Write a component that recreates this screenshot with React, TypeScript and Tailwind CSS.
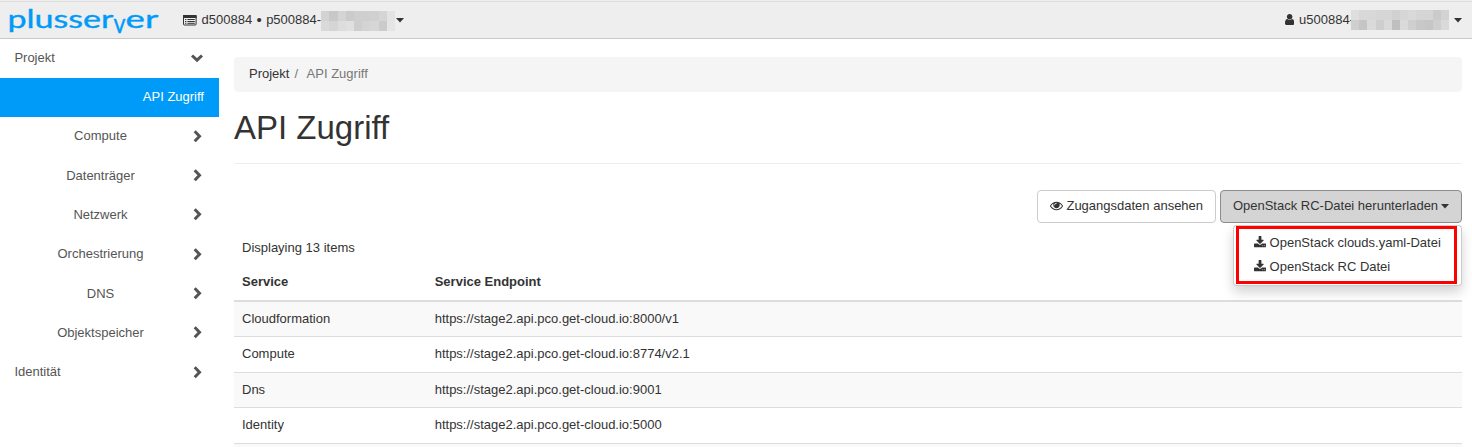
import type { ReactNode } from 'react';

function Glyph({ w, d, className = '' }: { w: number; d: string; className?: string }) {
  return (
    <svg
      className={`inline-block h-[13px] shrink-0 ${className}`}
      style={{ width: (w / 1792) * 13 }}
      viewBox={`0 0 ${w} 1792`}
      fill="currentColor"
      aria-hidden="true"
    >
      <path transform="translate(0 1536) scale(1 -1)" d={d} />
    </svg>
  );
}

const USER =
  'M1280 137q0 -109 -62.5 -187t-150.5 -78h-854q-88 0 -150.5 78t-62.5 187q0 85 8.5 160.5t31.5 152t58.5 131t94 89t134.5 34.5q131 -128 313 -128t313 128q76 0 134.5 -34.5t94 -89t58.5 -131t31.5 -152t8.5 -160.5zM1024 1024q0 -159 -112.5 -271.5t-271.5 -112.5t-271.5 112.5t-112.5 271.5t112.5 271.5t271.5 112.5t271.5 -112.5t112.5 -271.5z';
const EYE =
  'M1664 576q-152 236 -381 353q61 -104 61 -225q0 -185 -131.5 -316.5t-316.5 -131.5t-316.5 131.5t-131.5 316.5q0 121 61 225q-229 -117 -381 -353q133 -205 333.5 -326.5t434.5 -121.5t434.5 121.5t333.5 326.5zM944 960q0 20 -14 34t-34 14q-125 0 -214.5 -89.5t-89.5 -214.5q0 -20 14 -34t34 -14t34 14t14 34q0 86 61 147t147 61q20 0 34 14t14 34zM1792 576q0 -34 -20 -69q-140 -230 -376.5 -368.5t-499.5 -138.5t-499.5 139t-376.5 368q-20 35 -20 69t20 69q140 229 376.5 368t499.5 139t499.5 -139t376.5 -368q20 -35 20 -69z';
const DOWNLOAD =
  'M1280 192q0 26 -19 45t-45 19t-45 -19t-19 -45t19 -45t45 -19t45 19t19 45zM1536 192q0 26 -19 45t-45 19t-45 -19t-19 -45t19 -45t45 -19t45 19t19 45zM1664 416v-320q0 -40 -28 -68t-68 -28h-1472q-40 0 -68 28t-28 68v320q0 40 28 68t68 28h465l135 -136q58 -56 136 -56t136 56l136 136h464q40 0 68 -28t28 -68zM1339 985q17 -41 -14 -70l-448 -448q-18 -19 -45 -19t-45 19l-448 448q-31 29 -14 70q17 39 59 39h256v448q0 26 19 45t45 19h256q26 0 45 -19t19 -45v-448h256q42 0 59 -39z';

function Caret({ className = '' }: { className?: string }) {
  return (
    <svg className={`inline-block h-[5px] w-2 shrink-0 ${className}`} viewBox="0 0 8 5" fill="currentColor" aria-hidden="true">
      <path d="M0 0H8L4 4.6Z" />
    </svg>
  );
}

function Chevron({ open = false }: { open?: boolean }) {
  return (
    <svg className="h-[14px] w-[14px]" viewBox="0 0 14 14" fill="none" stroke="currentColor" strokeWidth="3" aria-hidden="true">
      {open ? <path d="M2 4.5 7 9.2 12 4.5" /> : <path d="M4.7 1.3 9.5 6.3 4.7 11.3" />}
    </svg>
  );
}

function ListIcon() {
  return (
    <svg className="h-[11px] w-[14px] shrink-0" viewBox="0 0 14 11" fill="none" stroke="currentColor" aria-hidden="true">
      <rect x="0.5" y="0.5" width="12.6" height="9.5" rx="0.8" />
      <path d="M0 1.5H13.6" strokeWidth="3" />
      <path d="M2 4.5H3.4M4.4 4.5H11.8M2 6.5H3.4M4.4 6.5H11.8M2 8.3H3.4M4.4 8.3H11.8" strokeWidth="1" />
    </svg>
  );
}

function Mosaic({ colors, className }: { colors: string[]; className: string }) {
  return (
    <div className={`grid grid-rows-2 ${className}`}>
      {colors.map((c, i) => (
        <span key={i} style={{ backgroundColor: c }} />
      ))}
    </div>
  );
}

const projectTiles = [
  '#d3d3d3', '#c8c8c8', '#d4d4d4', '#cbcbcb', '#cfcfcf', '#cfcfcf', '#d0d0d0', '#d5d5d5', '#e3e3e3',
  '#dadada', '#d5d5d5', '#dddddd', '#e0e0e0', '#cecece', '#d4d4d4', '#d6d6d6', '#cbcbcb', '#e5e5e5',
];
const userTiles = [
  '#dedede', '#d8d8d8', '#d8d8d8', '#d6d6d6', '#d6d6d6', '#d1d1d1', '#d6d6d6', '#d9d9d9', '#d5d5d5', '#d5d5d5', '#cbcbcb', '#d3d3d3',
  '#cfcfcf', '#c5c5c5', '#dadada', '#cecece', '#d9d9d9', '#bfbfbf', '#dadada', '#cfcfcf', '#c8c8c8', '#c6c6c6', '#cfcfcf', '#dadada',
];

function Logo() {
  return (
    <svg
      className="h-[36px] w-[151px] shrink-0 overflow-visible fill-[#009bf8] stroke-[#009bf8] stroke-[0.35] font-['Lato',sans-serif]"
      viewBox="0 0 151 36"
      role="img"
      aria-label="plusserver"
    >
      <text transform="translate(-0.6 25.5) scale(1.36 1)" textLength="78" lengthAdjust="spacingAndGlyphs" className="text-[25px]">
        plusser
      </text>
      <text transform="translate(105.5 30.5)" textLength="12" lengthAdjust="spacingAndGlyphs" className="text-[27px]">
        v
      </text>
      <text transform="translate(117.6 25.5) scale(1.36 1)" textLength="24" lengthAdjust="spacingAndGlyphs" className="text-[25px]">
        er
      </text>
    </svg>
  );
}

function Header() {
  return (
    <header className="h-[39px] border-b border-b-[#c8c8c8] bg-[#eeeeee] pt-px">
      <div className="flex h-[37px] items-center border-t border-[#dddddd] pr-[10px] pl-2">
        <Logo />
        <div className="ml-6 flex items-center pt-px">
          <ListIcon />
          <span className="ml-[4.5px] whitespace-pre">d500884</span>
          <span className="w-[14px] pb-px text-center text-[15px] leading-[18px]">•</span>
          <span className="w-[55px] whitespace-nowrap">p500884-</span>
          <Mosaic colors={projectTiles} className="h-5 w-[74px] grid-cols-9" />
          <Caret className="ml-[0.5px]" />
        </div>
        <div className="ml-auto flex items-center">
          <Glyph w={1280} d={USER} className="mb-px" />
          <span className="ml-[5px] w-[52px] pt-px whitespace-nowrap">u500884-</span>
          <Mosaic colors={userTiles} className="h-5 w-[98px] grid-cols-12" />
          <Caret className="ml-[5px]" />
        </div>
      </div>
    </header>
  );
}

const panels = ['Compute', 'Datenträger', 'Netzwerk', 'Orchestrierung', 'DNS', 'Objektspeicher'];

function NavRow({ children, nested = false, open = false }: { children: ReactNode; nested?: boolean; open?: boolean }) {
  return (
    <div className="flex h-[39.3px] items-center pr-[15px] pb-[0.4px] pl-[14.4px]">
      <span className={nested ? 'w-[172.2px] text-center' : 'w-[172.2px]'}>{children}</span>
      <span className="ml-[3px]">
        <Chevron open={open} />
      </span>
    </div>
  );
}

function Sidebar() {
  return (
    <nav className="w-[219px] shrink-0 text-[#555555]">
      <NavRow open>Projekt</NavRow>
      <div className="flex h-[39px] items-center justify-end bg-[#009bf8] pr-[15px] pb-px text-white">API Zugriff</div>
      {panels.map((p) => (
        <NavRow key={p} nested>
          {p}
        </NavRow>
      ))}
      <NavRow>Identität</NavRow>
    </nav>
  );
}

const services = [
  ['Cloudformation', 'https://stage2.api.pco.get-cloud.io:8000/v1'],
  ['Compute', 'https://stage2.api.pco.get-cloud.io:8774/v2.1'],
  ['Dns', 'https://stage2.api.pco.get-cloud.io:9001'],
  ['Identity', 'https://stage2.api.pco.get-cloud.io:5000'],
];

function Actions() {
  return (
    <div className="mt-[26px] flex justify-end gap-1">
      <button className="flex h-[33px] w-[179px] items-center justify-center gap-[3.5px] rounded border border-[#cccccc] bg-white">
        <Glyph w={1792} d={EYE} className="mb-0.5" />
        Zugangsdaten ansehen
      </button>
      <div className="relative">
        <button className="flex h-[33px] w-[242px] items-center justify-center gap-[3px] rounded border border-[#8c8c8c] bg-[#d4d4d4]">
          OpenStack RC-Datei herunterladen
          <Caret />
        </button>
        <div className="absolute top-[35px] right-0 h-[61px] w-[229px] rounded border border-black/20 bg-white shadow-[0_6px_12px_rgba(0,0,0,0.175)]">
          <ul className="ml-0.5 flex h-[58px] w-[221px] flex-col justify-center border-[3px] border-[#ff0000] pl-[15px]">
            {['OpenStack clouds.yaml-Datei', 'OpenStack RC Datei'].map((t) => (
              <li key={t} className="flex h-6 items-center gap-[3.5px] whitespace-nowrap">
                <Glyph w={1664} d={DOWNLOAD} className="mb-0.5" />
                {t}
              </li>
            ))}
          </ul>
        </div>
      </div>
    </div>
  );
}

export default function App() {
  return (
    <div className="h-[447px] overflow-hidden bg-white font-['Liberation_Sans',Arial,sans-serif] text-[13px] leading-[18.57px] text-[#333333]">
      <Header />
      <div className="flex">
        <Sidebar />
        <main className="flex-1 pt-[18px] pr-[10px] pl-[15px]">
          <div className="flex h-[35px] items-center rounded bg-[#f5f5f5] px-[15px]">
            <span>Projekt</span>
            <span className="ml-[5px] text-[#777777]">/</span>
            <span className="ml-[8.5px] text-[#777777]">API Zugriff</span>
          </div>
          <h1 className="mt-4 h-[56px] border-b border-[#eeeeee] text-[33px] leading-[40px]">API Zugriff</h1>
          <Actions />
          <div className="mt-4 h-[18.5px] pl-2">Displaying 13 items</div>
          <div className="mt-[5.5px]">
            <div className="flex h-[39px] items-center border-b-2 border-[#dddddd] pt-[1.5px] pl-2 font-bold">
              <span className="w-[192.7px]">Service</span>
              <span>Service Endpoint</span>
            </div>
            {services.map(([name, url]) => (
              <div key={name} className="flex h-[35px] items-center border-b border-[#dddddd] bg-[#f9f9f9] pl-2 odd:h-9 odd:bg-white">
                <span className="w-[192.7px]">{name}</span>
                <span>{url}</span>
              </div>
            ))}
            <div className="h-9 bg-[#f9f9f9]" />
          </div>
        </main>
      </div>
    </div>
  );
}
